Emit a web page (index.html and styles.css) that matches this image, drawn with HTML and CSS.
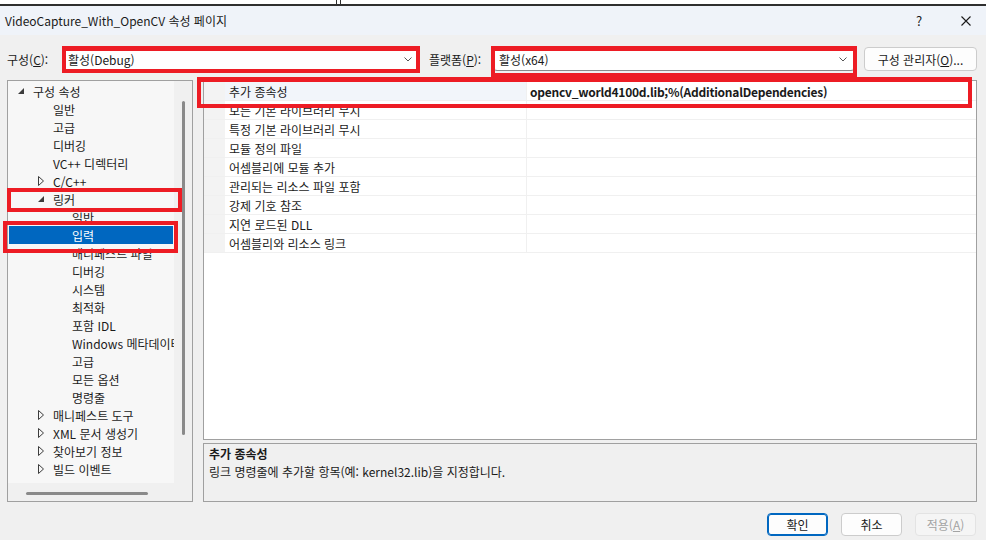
FILE: index.html
```html
<!DOCTYPE html>
<html lang="ko">

<head>
    <meta charset="UTF-8">
    <meta name="viewport" content="width=device-width, initial-scale=1.0">
    <title>VideoCapture_With_OpenCV 속성 페이지</title>
    <link rel="stylesheet" href="styles.css">
</head>

<body>
    <div class="dialog">
        <div class="frame-top"><span class="frame-tab"></span></div>

        <!-- Title bar -->
        <div class="titlebar">
            <span class="title">VideoCapture_With_OpenCV 속성 페이지</span>
            <span class="help">?</span>
            <svg class="close" width="10" height="10" viewBox="0 0 10 10">
                <path d="M0.5 0.5 L9.5 9.5 M9.5 0.5 L0.5 9.5" stroke="#1a1a1a" stroke-width="1.1" fill="none" />
            </svg>
        </div>

        <!-- Configuration / platform row -->
        <div class="config-row">
            <label class="config-label">구성(<u>C</u>):</label>
            <div class="combo combo-config">
                <span>활성(Debug)</span>
                <svg class="chevron" width="8" height="5" viewBox="0 0 8 5">
                    <path d="M0.5 0.5 L4 4 L7.5 0.5" stroke="#555" stroke-width="1" fill="none" />
                </svg>
            </div>
            <label class="platform-label">플랫폼(<u>P</u>):</label>
            <div class="combo combo-platform">
                <span>활성(x64)</span>
                <svg class="chevron" width="8" height="5" viewBox="0 0 8 5">
                    <path d="M0.5 0.5 L4 4 L7.5 0.5" stroke="#555" stroke-width="1" fill="none" />
                </svg>
            </div>
            <button class="btn btn-manager">구성 관리자(<u>O</u>)...</button>
        </div>

        <div class="main">
            <!-- Tree of property pages -->
            <div class="tree-panel">
                <div class="tree">
                    <div class="node lvl0"><span class="arrow"><svg width="6" height="6" viewBox="0 0 6 6"><path d="M6 0 L6 6 L0 6 Z" fill="#3c3c3c" /></svg></span>구성 속성</div>
                    <div class="node lvl1">일반</div>
                    <div class="node lvl1">고급</div>
                    <div class="node lvl1">디버깅</div>
                    <div class="node lvl1">VC++ 디렉터리</div>
                    <div class="node lvl1 has-arrow"><span class="arrow"><svg width="6" height="10" viewBox="0 0 6 10"><path d="M0.5 0.5 L5.5 5 L0.5 9.5 Z" fill="none" stroke="#3c3c3c" stroke-width="1" /></svg></span>C/C++</div>
                    <div class="node lvl1 has-arrow"><span class="arrow"><svg width="6" height="6" viewBox="0 0 6 6"><path d="M6 0 L6 6 L0 6 Z" fill="#3c3c3c" /></svg></span>링커</div>
                    <div class="node lvl2">일반</div>
                    <div class="node lvl2 selected">입력</div>
                    <div class="node lvl2">매니페스트 파일</div>
                    <div class="node lvl2">디버깅</div>
                    <div class="node lvl2">시스템</div>
                    <div class="node lvl2">최적화</div>
                    <div class="node lvl2">포함 IDL</div>
                    <div class="node lvl2">Windows 메타데이터</div>
                    <div class="node lvl2">고급</div>
                    <div class="node lvl2">모든 옵션</div>
                    <div class="node lvl2">명령줄</div>
                    <div class="node lvl1 has-arrow"><span class="arrow"><svg width="6" height="10" viewBox="0 0 6 10"><path d="M0.5 0.5 L5.5 5 L0.5 9.5 Z" fill="none" stroke="#3c3c3c" stroke-width="1" /></svg></span>매니페스트 도구</div>
                    <div class="node lvl1 has-arrow"><span class="arrow"><svg width="6" height="10" viewBox="0 0 6 10"><path d="M0.5 0.5 L5.5 5 L0.5 9.5 Z" fill="none" stroke="#3c3c3c" stroke-width="1" /></svg></span>XML 문서 생성기</div>
                    <div class="node lvl1 has-arrow"><span class="arrow"><svg width="6" height="10" viewBox="0 0 6 10"><path d="M0.5 0.5 L5.5 5 L0.5 9.5 Z" fill="none" stroke="#3c3c3c" stroke-width="1" /></svg></span>찾아보기 정보</div>
                    <div class="node lvl1 has-arrow"><span class="arrow"><svg width="6" height="10" viewBox="0 0 6 10"><path d="M0.5 0.5 L5.5 5 L0.5 9.5 Z" fill="none" stroke="#3c3c3c" stroke-width="1" /></svg></span>빌드 이벤트</div>
                </div>
                <div class="vscroll"><span class="vthumb"></span></div>
                <div class="hscroll"><span class="hthumb"></span></div>
                <div class="corner"></div>
            </div>

            <div class="right">
                <!-- Property grid -->
                <div class="grid">
                    <div class="prop first">
                        <span class="gutter"></span>
                        <span class="name">추가 종속성</span>
                        <span class="value bold">opencv_world4100d.lib;%(AdditionalDependencies)</span>
                    </div>
                    <div class="prop"><span class="gutter"></span><span class="name">모든 기본 라이브러리 무시</span><span class="value"></span></div>
                    <div class="prop"><span class="gutter"></span><span class="name">특정 기본 라이브러리 무시</span><span class="value"></span></div>
                    <div class="prop"><span class="gutter"></span><span class="name">모듈 정의 파일</span><span class="value"></span></div>
                    <div class="prop"><span class="gutter"></span><span class="name">어셈블리에 모듈 추가</span><span class="value"></span></div>
                    <div class="prop"><span class="gutter"></span><span class="name">관리되는 리소스 파일 포함</span><span class="value"></span></div>
                    <div class="prop"><span class="gutter"></span><span class="name">강제 기호 참조</span><span class="value"></span></div>
                    <div class="prop"><span class="gutter"></span><span class="name">지연 로드된 DLL</span><span class="value"></span></div>
                    <div class="prop"><span class="gutter"></span><span class="name">어셈블리와 리소스 링크</span><span class="value"></span></div>
                </div>

                <!-- Description -->
                <div class="desc">
                    <div class="desc-title">추가 종속성</div>
                    <div class="desc-text">링크 명령줄에 추가할 항목(예: kernel32.lib)을 지정합니다.</div>
                </div>
            </div>
        </div>

        <div class="buttons">
            <button class="btn btn-primary">확인</button>
            <button class="btn">취소</button>
            <button class="btn btn-disabled">적용(<u>A</u>)</button>
        </div>

        <!-- Red annotation boxes drawn over the screenshot -->
        <div class="mark mark-config"></div>
        <div class="mark mark-platform"></div>
        <div class="mark mark-prop"></div>
        <div class="mark mark-linker"></div>
        <div class="mark mark-input"></div>
    </div>
</body>

</html>
```

FILE: styles.css
```css
body {
    margin: 0;
    padding: 0;
    font-family: "Noto Sans CJK KR", sans-serif;
    font-size: 12px;
    color: #1a1a1a;
    background-color: #f0f0f0;
}

.dialog {
    position: relative;
    width: 986px;
    height: 540px;
    overflow: hidden;
    background-color: #f0f0f0;
}

.frame-top {
    display: flex;
    height: 4px;
    background-color: #fff;
    border-bottom: 2px solid #2f2f2f;
}

.frame-tab {
    width: 3px;
    height: 4px;
    margin-left: 336px;
    border: 1px solid #2f2f2f;
    border-top: none;
    border-bottom: none;
    background-color: #fff;
}

.titlebar {
    display: flex;
    align-items: center;
    height: 29px;
    padding-left: 5px;
    background-color: #eff3f9;
}

.title {
    flex: 1;
    color: #1a1a1a;
}

.help {
    width: 10px;
    text-align: center;
    font-size: 13px;
    margin-right: 37px;
}

.close {
    margin-right: 15px;
}

.config-row {
    display: flex;
    align-items: center;
    height: 24px;
    margin-top: 12px;
    padding-left: 7px;
}

.config-label {
    width: 57px;
}

.platform-label {
    width: 65px;
    margin-left: 10px;
}

.combo {
    display: flex;
    align-items: center;
    justify-content: space-between;
    box-sizing: border-box;
    height: 23px;
    padding: 0 6px 0 3px;
    background-color: #fff;
    border: 1px solid #d6d6d6;
    border-bottom-color: #8a8a8a;
    border-radius: 3px;
}

.combo-config {
    width: 355px;
}

.combo-platform {
    width: 360px;
    padding-left: 4px;
}

.btn {
    box-sizing: border-box;
    height: 23px;
    width: 61px;
    padding: 0;
    font-family: inherit;
    font-size: 12px;
    color: #1a1a1a;
    background-color: #fdfdfd;
    border: 1px solid #cccccc;
    border-radius: 4px;
}

.btn-manager {
    width: 113px;
    height: 24px;
    margin-left: 10px;
}

.btn-primary {
    border: 1px solid #0067c0;
    box-shadow: inset 0 0 0 1px #0067c0;
}

.btn-disabled {
    color: #a3a3a3;
    background-color: #f5f5f5;
    border-color: #e3e3e3;
}

.main {
    display: flex;
    gap: 10px;
    height: 422px;
    margin-top: 9px;
    padding-left: 7px;
}

.tree-panel {
    display: grid;
    grid-template-columns: 166px 18px;
    grid-template-rows: 402px 18px;
    box-sizing: border-box;
    width: 186px;
    border: 1px solid #a0a0a0;
    background-color: #f0f0f0;
}

.tree {
    overflow: hidden;
    padding-top: 1px;
    background-color: #f7f7f7;
}

.node {
    display: flex;
    align-items: center;
    height: 18px;
    white-space: nowrap;
    color: #1b1b1b;
}

.arrow {
    display: flex;
    align-items: center;
    width: 15px;
}

.lvl0 {
    padding-left: 10px;
}

.lvl1 {
    padding-left: 45px;
}

.lvl1.has-arrow {
    padding-left: 30px;
}

.lvl2 {
    padding-left: 64px;
}

.selected {
    margin-left: 1px;
    margin-right: 1px;
    padding-left: 63px;
    background-color: #0067c0;
    color: #fff;
}

.vscroll {
    display: flex;
    justify-content: center;
    padding-top: 20px;
}

.vthumb {
    width: 3px;
    height: 334px;
    margin-left: 1px;
    border-radius: 2px;
    background-color: #8a8a8a;
}

.hscroll {
    display: flex;
    align-items: center;
    padding-left: 18px;
}

.hthumb {
    width: 122px;
    height: 3px;
    margin-top: 2px;
    border-radius: 2px;
    background-color: #8a8a8a;
}

.right {
    display: flex;
    flex-direction: column;
    gap: 3px;
    width: 774px;
}

.grid {
    box-sizing: border-box;
    height: 360px;
    padding-top: 1px;
    background-color: #fff;
    border: 1px solid #a0a0a0;
}

.prop {
    display: grid;
    grid-template-columns: 21px 301px 1fr;
    box-sizing: border-box;
    height: 19px;
    border-bottom: 1px solid #f0f0f0;
}

.gutter {
    background-color: #f3f3f3;
}

.name {
    display: flex;
    align-items: center;
    padding-left: 4px;
    white-space: nowrap;
}

.prop.first .name {
    background-color: #f2f5fa;
}

.value {
    display: flex;
    align-items: center;
    padding-left: 3px;
    border-left: 1px solid #f0f0f0;
    white-space: nowrap;
}

.bold {
    font-weight: bold;
    letter-spacing: -0.25px;
}

.desc {
    box-sizing: border-box;
    height: 59px;
    padding: 1px 5px;
    background-color: #f0f0f0;
    border: 1px solid #a0a0a0;
}

.desc-title {
    height: 18px;
    line-height: 18px;
    font-weight: bold;
}

.desc-text {
    height: 18px;
    line-height: 18px;
}

.buttons {
    display: flex;
    justify-content: flex-end;
    gap: 13px;
    margin-top: 11px;
    padding-right: 10px;
}

.mark {
    position: absolute;
    box-sizing: border-box;
    border: 4px solid #ed1c24;
}

.mark-config {
    left: 62px;
    top: 46px;
    width: 358px;
    height: 27px;
    border-top-width: 5px;
}

.mark-platform {
    left: 491px;
    top: 46px;
    width: 366px;
    height: 31px;
    border-top-width: 5px;
}

.mark-prop {
    left: 197px;
    top: 77px;
    width: 775px;
    height: 31px;
    border-top-width: 5px;
}

.mark-linker {
    left: 7px;
    top: 188px;
    width: 175px;
    height: 24px;
}

.mark-input {
    left: 3px;
    top: 221px;
    width: 175px;
    height: 32px;
}
```
